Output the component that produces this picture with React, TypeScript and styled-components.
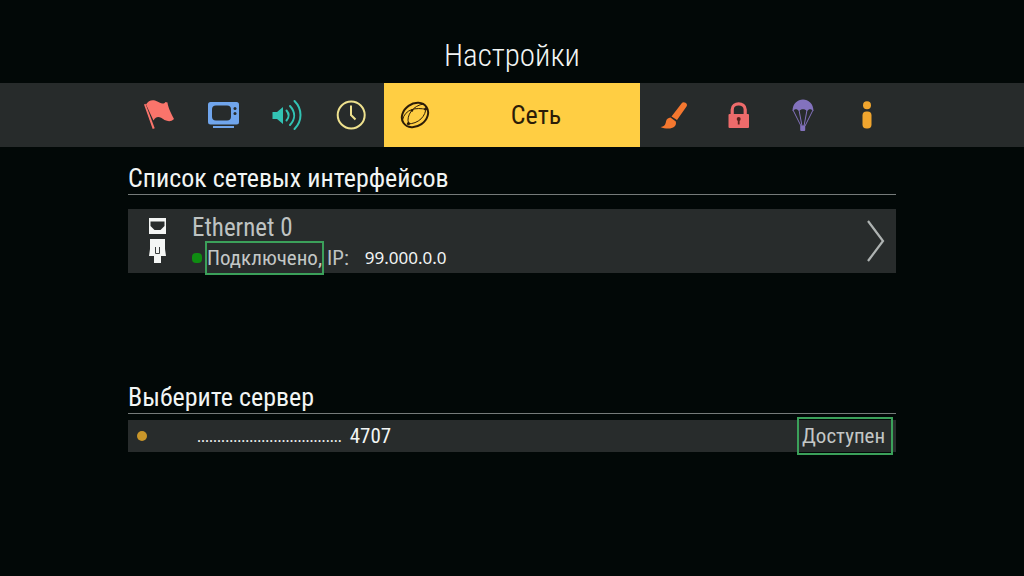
import React from "react";
import styled, { createGlobalStyle } from "styled-components";

const GlobalStyle = createGlobalStyle`
  * { box-sizing: border-box; }
  body {
    margin: 0;
    background: #020807;
    color: #f2f5f4;
    font-family: "Roboto Condensed", "Liberation Sans Narrow", Roboto, sans-serif;
  }
  button { font: inherit; color: inherit; border: 0; padding: 0; margin: 0; cursor: pointer; }
`;

const Page = styled.main`
  min-height: 100vh;
  padding-top: 32px;
`;

const Title = styled.h1`
  margin: 0 0 3px;
  font-size: 31px;
  line-height: 48px;
  font-weight: 300;
  text-align: center;
`;

const TabBar = styled.nav`
  background: #272b2b;
  padding: 0 12.5%;
`;

const Tabs = styled.div`
  display: grid;
  grid-template-columns: repeat(4, 1fr) 4fr repeat(4, 1fr);
  height: 64px;
`;

const Tab = styled.button<{ $color: string }>`
  display: flex;
  align-items: center;
  justify-content: center;
  background: transparent;
  && { color: ${(p) => p.$color}; }
  nav button:nth-child(5) ~ & { padding-left: 5px; }
`;

const ActiveTab = styled.button`
  display: grid;
  grid-template-columns: 1fr 3fr;
  align-items: center;
  justify-items: center;
  background: #ffce43;
  && { color: #2c1c08; font-size: 26px; line-height: 32px; }
  & > span { padding-right: 16px; }
`;

const Icon = styled.svg`
  display: block;
  width: 32px;
  height: 32px;
`;

const Content = styled.div`
  padding: 16px 12.5%;
  display: flex;
  flex-direction: column;
  gap: 109px;
`;

const Section = styled.section<{ $gap: number }>`
  display: flex;
  flex-direction: column;
  gap: ${(p) => p.$gap}px;
`;

const Heading = styled.h2`
  margin: 0;
  font-size: 26px;
  line-height: 31px;
  font-weight: 400;
  border-bottom: 1px solid #767b7a;
`;

const InterfaceRow = styled.button`
  display: flex;
  align-items: center;
  width: 100%;
  height: 64px;
  background: #282c2c;
  text-align: left;
`;

const PortIcon = styled.svg`
  width: 20px;
  height: 48px;
  margin: 0 24px 0 20px;
`;

const Details = styled.span`
  flex: 1;
  display: flex;
  flex-direction: column;
  color: #bfc3c2;
`;

const Name = styled.span`
  font-size: 25px;
  line-height: 28px;
  padding-top: 6px;
`;

const Status = styled.span`
  display: flex;
  align-items: center;
  height: 32px;
  font-size: 21px;
  line-height: 24px;
  white-space: nowrap;
`;

const Dot = styled.span<{ $color: string }>`
  width: 10px;
  height: 10px;
  border-radius: 4px;
  background: ${(p) => p.$color};
`;

const Marked = styled.span`
  display: flex;
  align-items: center;
  border: 2px solid #3ba05a;
  color: #c3c7c6;
`;

const Connected = styled(Marked)`
  justify-content: center;
  width: 119px;
  height: 34px;
  margin: 0 3px;
`;

const Address = styled.span`
  margin-left: 16px;
  font-family: "Noto Sans", sans-serif;
  font-size: 17px;
  color: #f2f5f4;
`;

const Chevron = styled.svg`
  width: 20px;
  height: 44px;
  margin-right: 10px;
`;

const ServerRow = styled.button`
  display: flex;
  align-items: center;
  width: 100%;
  height: 32px;
  padding: 0 3px 0 9px;
  background: #282c2c;
  && { font-size: 21px; line-height: 24px; }
`;

const RoundDot = styled(Dot)`
  border-radius: 50%;
`;

const ServerName = styled.span`
  flex: 1;
  display: flex;
  align-items: center;
  gap: 8px;
  padding-left: 50px;
`;

const Mask = styled.span`
  font-family: "Noto Sans", sans-serif;
  font-size: 15px;
`;

const Available = styled(Marked)`
  width: 96px;
  height: 38px;
  padding-left: 3px;
`;

const Flag = () => (
  <Icon viewBox="0 0 32 32" fill="currentColor">
    <path d="M0 5.500 L1.500 4.800 L10.700 29.200 L8.700 30 Z" />
    <path d="M2 5.500 C4 1.500 8 .5 11 1.500 C16 3.500 19 6.500 21.500 3 L23.500 3.500 C24 8 26 12 30 20 C27 23 24 22.500 20.500 21 C16 18 13 16 9.500 21.500 Z" />
  </Icon>
);

const Tv = () => (
  <Icon viewBox="0 0 32 32">
    <rect x="0" y="3" width="31" height="22.500" rx="2.500" fill="currentColor" />
    <rect x="4" y="6.500" width="19" height="15" rx="4" fill="#272b2b" />
    <circle cx="27" cy="9.500" r="1.500" fill="#272b2b" />
    <circle cx="27" cy="14.500" r="1.500" fill="#272b2b" />
    <path d="M5 28H26" stroke="currentColor" strokeWidth="2" />
  </Icon>
);

const Sound = () => (
  <Icon viewBox="0 0 32 32" fill="none" stroke="currentColor" strokeWidth="2" strokeLinecap="round">
    <path d="M0.500 13H5L11 8V25L5 20H0.500Z" fill="currentColor" stroke="none" />
    <path d="M14.500 11.500C17.500 15 17.500 18 14.500 21.500M18 7C23.500 13 23.500 20 18 26M22.500 2C30.500 10 30.500 22 22.500 30" />
  </Icon>
);

const Clock = () => (
  <Icon viewBox="0 0 32 32" fill="none" stroke="currentColor" strokeWidth="2">
    <circle cx="15.200" cy="16" r="13.500" />
    <path d="M15 6.500V16L19.500 20.500" />
  </Icon>
);

const Network = () => (
  <Icon viewBox="0 0 32 32" fill="none" stroke="#2c1c08">
    <g transform="rotate(-35 15 16)">
      <ellipse cx="15" cy="16" rx="14" ry="11.200" strokeWidth="2" />
    </g>
    <path d="M2.500 21C5 10 16 8 26.500 10.500M26 8C26 17 19 25 7 25M8.500 24C6 17 13 6 24 5" strokeWidth="1" />
    <circle cx="12" cy="11.500" r="1.200" fill="#2c1c08" stroke="none" />
    <circle cx="25.500" cy="10.200" r="1.400" fill="#2c1c08" stroke="none" />
    <circle cx="8.500" cy="24.500" r="1.600" fill="#2c1c08" stroke="none" />
  </Icon>
);

const Brush = () => (
  <Icon viewBox="0 0 32 32" fill="currentColor">
    <path d="M22.500 4.500C23.500 3 25 2.800 26.500 3.800C28 4.800 28.500 6 27.500 7.500L18 21L12.500 17.500Z" />
    <path d="M11.500 18.500L16.800 22.500C18 27 14 29.500 9.500 29.500C6 29.500 4 29.200 1.500 28C6 27.500 6.500 25 7 22.500C7.500 20 9 18.800 11.500 18.500Z" />
  </Icon>
);

const Lock = () => (
  <Icon viewBox="0 0 32 32">
    <path d="M9.200 17V10.500C9.200 3 22.200 3 22.200 10.500V17" fill="none" stroke="currentColor" strokeWidth="3.200" />
    <rect x="5.500" y="15" width="20.500" height="14" rx="1" fill="currentColor" />
    <circle cx="15.700" cy="20" r="2" fill="#5a211c" />
    <path d="M15.700 20V25.500" stroke="#5a211c" strokeWidth="1.800" />
  </Icon>
);

const Parachute = () => (
  <Icon viewBox="0 0 32 32" fill="none" stroke="currentColor">
    <path d="M5.500 12C5.500 -3.500 26.500 -3.500 26.500 12C24 9.500 22 9.500 20 12C18 9.500 14 9.500 12 12C10 9.500 8 9.500 5.500 12Z" fill="currentColor" stroke="none" />
    <path d="M6 11L14 27M12 11L15 27M20 11L17 27M26 11L18 27" />
    <rect x="13.200" y="26.500" width="5" height="5.500" rx="1" fill="currentColor" stroke="none" />
  </Icon>
);

const Info = () => (
  <Icon viewBox="0 0 32 32" fill="currentColor">
    <circle cx="16" cy="6.200" r="4" />
    <rect x="11.500" y="12.500" width="9" height="17" rx="4" />
  </Icon>
);

export default function App() {
  return (
    <>
      <GlobalStyle />
      <Page>
        <Title>Настройки</Title>
        <TabBar>
          <Tabs>
            <Tab $color="#fa746b" aria-label="Язык"><Flag /></Tab>
            <Tab $color="#70a5ec" aria-label="Видео"><Tv /></Tab>
            <Tab $color="#32c3b4" aria-label="Звук"><Sound /></Tab>
            <Tab $color="#eee18e" aria-label="Время"><Clock /></Tab>
            <ActiveTab>
              <Network />
              <span>Сеть</span>
            </ActiveTab>
            <Tab $color="#f4772f" aria-label="Оформление"><Brush /></Tab>
            <Tab $color="#ee6b6b" aria-label="Блокировка"><Lock /></Tab>
            <Tab $color="#8372bd" aria-label="Дополнительно"><Parachute /></Tab>
            <Tab $color="#f0a52e" aria-label="Информация"><Info /></Tab>
          </Tabs>
        </TabBar>
        <Content>
          <Section $gap={14}>
            <Heading>Список сетевых интерфейсов</Heading>
            <InterfaceRow>
              <PortIcon viewBox="0 0 20 48">
                <path d="M1 1H18V17H1Z" fill="#f4f6f5" />
                <path d="M2.500 4.500H16.500V9L12.500 13H6.500L2.500 9Z" fill="#282c2c" />
                <path d="M2 22H17V32L18 39H13V46H6V39H1L2 32Z" fill="#f4f6f5" />
                <path d="M7.500 30V36.500H11.500V30" fill="none" stroke="#3a3e3e" />
              </PortIcon>
              <Details>
                <Name>Ethernet 0</Name>
                <Status>
                  <Dot $color="#0f8c12" />
                  <Connected>Подключено,</Connected>
                  <span>IP:</span>
                  <Address>99.000.0.0</Address>
                </Status>
              </Details>
              <Chevron viewBox="0 0 20 44" fill="none" stroke="#aeb3b2" strokeWidth="2.200">
                <path d="M2 2L17 22L2 42" />
              </Chevron>
            </InterfaceRow>
          </Section>
          <Section $gap={6}>
            <Heading>Выберите сервер</Heading>
            <ServerRow>
              <RoundDot $color="#c9962a" />
              <ServerName>
                <Mask>....................................</Mask>
                <span>4707</span>
              </ServerName>
              <Available>Доступен</Available>
            </ServerRow>
          </Section>
        </Content>
      </Page>
    </>
  );
}
